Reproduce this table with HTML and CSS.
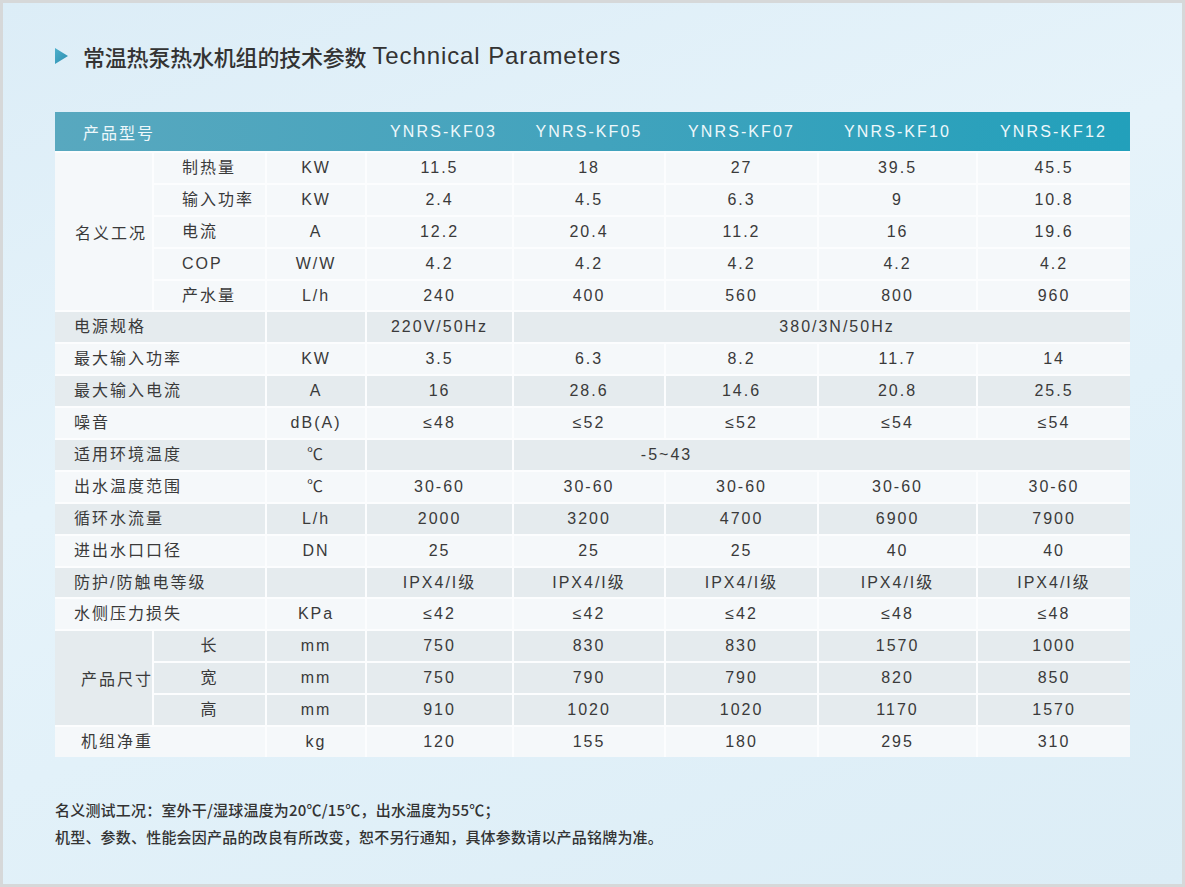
FILE: index.html
```html
<!DOCTYPE html>
<html lang="zh-CN">
<head>
<meta charset="utf-8">
<title>常温热泵热水机组的技术参数</title>
<link rel="stylesheet" href="styles.css">
</head>
<body>
<div class="frame">
  <h1 class="title">
    <svg class="tri" width="13" height="16" viewBox="0 0 13 16"><defs><linearGradient id="tg" x1="0" y1="0" x2="1" y2="1"><stop offset="0" stop-color="#4fb0cc"/><stop offset="1" stop-color="#2a8db0"/></linearGradient></defs><polygon points="0,0 13,8 0,16" fill="url(#tg)"/></svg>
    <span class="title-cn">常温热泵热水机组的技术参数</span><span class="title-en">Technical Parameters</span>
  </h1>

  <table class="spec">
    <colgroup>
      <col class="c1"><col class="c2"><col class="c3"><col class="c4"><col class="c5"><col class="c6"><col class="c7"><col class="c8">
    </colgroup>
    <thead>
      <tr class="head">
        <th colspan="3" class="h-label">产品型号</th>
        <th class="h-first">YNRS-KF03</th><th>YNRS-KF05</th><th>YNRS-KF07</th><th>YNRS-KF10</th><th>YNRS-KF12</th>
      </tr>
    </thead>
    <tbody>
      <tr class="lt">
        <td rowspan="5" class="grp g1">名义工况</td>
        <td class="sub">制热量</td><td>KW</td><td>11.5</td><td>18</td><td>27</td><td>39.5</td><td>45.5</td>
      </tr>
      <tr class="lt"><td class="sub">输入功率</td><td>KW</td><td>2.4</td><td>4.5</td><td>6.3</td><td>9</td><td>10.8</td></tr>
      <tr class="lt"><td class="sub">电流</td><td>A</td><td>12.2</td><td>20.4</td><td>11.2</td><td>16</td><td>19.6</td></tr>
      <tr class="lt"><td class="sub">COP</td><td>W/W</td><td>4.2</td><td>4.2</td><td>4.2</td><td>4.2</td><td>4.2</td></tr>
      <tr class="lt"><td class="sub">产水量</td><td>L/h</td><td>240</td><td>400</td><td>560</td><td>800</td><td>960</td></tr>

      <tr class="gr"><td colspan="2" class="lbl">电源规格</td><td></td><td>220V/50Hz</td><td colspan="4" class="wide-power">380/3N/50Hz</td></tr>
      <tr class="lt"><td colspan="2" class="lbl">最大输入功率</td><td>KW</td><td>3.5</td><td>6.3</td><td>8.2</td><td>11.7</td><td>14</td></tr>
      <tr class="gr"><td colspan="2" class="lbl">最大输入电流</td><td>A</td><td>16</td><td>28.6</td><td>14.6</td><td>20.8</td><td>25.5</td></tr>
      <tr class="lt"><td colspan="2" class="lbl">噪音</td><td>dB(A)</td><td>≤48</td><td>≤52</td><td>≤52</td><td>≤54</td><td>≤54</td></tr>
      <tr class="gr"><td colspan="2" class="lbl">适用环境温度</td><td>℃</td><td></td><td colspan="4" class="wide-temp">-5~43</td></tr>
      <tr class="lt"><td colspan="2" class="lbl">出水温度范围</td><td>℃</td><td>30-60</td><td>30-60</td><td>30-60</td><td>30-60</td><td>30-60</td></tr>
      <tr class="gr"><td colspan="2" class="lbl">循环水流量</td><td>L/h</td><td>2000</td><td>3200</td><td>4700</td><td>6900</td><td>7900</td></tr>
      <tr class="lt"><td colspan="2" class="lbl">进出水口口径</td><td>DN</td><td>25</td><td>25</td><td>25</td><td>40</td><td>40</td></tr>
      <tr class="gr"><td colspan="2" class="lbl">防护/防触电等级</td><td></td><td>IPX4/I级</td><td>IPX4/I级</td><td>IPX4/I级</td><td>IPX4/I级</td><td>IPX4/I级</td></tr>
      <tr class="lt"><td colspan="2" class="lbl">水侧压力损失</td><td>KPa</td><td>≤42</td><td>≤42</td><td>≤42</td><td>≤48</td><td>≤48</td></tr>

      <tr class="gr">
        <td rowspan="3" class="grp g2">产品尺寸</td>
        <td class="dim">长</td><td>mm</td><td>750</td><td>830</td><td>830</td><td>1570</td><td>1000</td>
      </tr>
      <tr class="gr"><td class="dim">宽</td><td>mm</td><td>750</td><td>790</td><td>790</td><td>820</td><td>850</td></tr>
      <tr class="gr"><td class="dim">高</td><td>mm</td><td>910</td><td>1020</td><td>1020</td><td>1170</td><td>1570</td></tr>
      <tr class="lt"><td colspan="2" class="lbl lbl-w">机组净重</td><td>kg</td><td>120</td><td>155</td><td>180</td><td>295</td><td>310</td></tr>
    </tbody>
  </table>

  <div class="notes">
    <p>名义测试工况：室外干/湿球温度为20℃/15℃，出水温度为55℃；</p>
    <p>机型、参数、性能会因产品的改良有所改变，恕不另行通知，具体参数请以产品铭牌为准。</p>
  </div>
</div>
</body>
</html>
```

FILE: styles.css
```css
html, body {
  margin: 0;
  padding: 0;
}

body {
  width: 1185px;
  height: 887px;
  overflow: hidden;
  font-family: "Liberation Sans", "Noto Sans CJK SC", sans-serif;
  color: #3a3a3a;
}

.frame {
  box-sizing: border-box;
  width: 1185px;
  height: 887px;
  border: 3px solid #d6d8d9;
  padding: 38px 52px 0 52px;
  background: linear-gradient(160deg, #dcedf7 0%, #e6f3fa 40%, #e2f1f9 60%, #dcedf6 100%);
}

.title {
  margin: 0;
  height: 30px;
  display: flex;
  align-items: center;
  font-weight: 500;
  color: #333;
  line-height: 30px;
}

.tri {
  display: block;
  margin-right: 15px;
  flex: none;
}

.title-cn {
  font-family: "Noto Sans CJK SC", sans-serif;
  font-size: 22px;
  letter-spacing: -0.2px;
}

.title-en {
  font-family: "Liberation Sans", sans-serif;
  font-size: 24px;
  letter-spacing: 0.9px;
  margin-left: 6px;
  font-weight: 400;
}

.spec {
  margin-top: 41px;
  width: 1075px;
  table-layout: fixed;
  border-collapse: collapse;
  border-style: hidden;
  font-size: 16px;
  letter-spacing: 2px;
}

.c1 { width: 98px; }
.c2 { width: 113px; }
.c3 { width: 100px; }
.c4 { width: 147px; }
.c5 { width: 152px; }
.c6 { width: 153px; }
.c7 { width: 159px; }
.c8 { width: 153px; }

.head {
  height: 39px;
  background: linear-gradient(90deg, #58a8bf 0%, #42a3bd 50%, #22a0bb 100%);
}

.head th {
  border: 0;
  padding: 0;
  height: 39px;
  font-weight: 400;
  color: #eef8fb;
  text-align: center;
  letter-spacing: 2.1px;
}

.head th.h-first { padding-left: 8px; }

.head .h-label {
  text-align: left;
  padding-left: 28px;
  font-family: "Noto Sans CJK SC", sans-serif;
  letter-spacing: 2px;
}

.spec td {
  border: 2px solid #fcfdfe;
  padding: 0;
  height: 29.9px;
  text-align: center;
  vertical-align: middle;
  white-space: nowrap;
  line-height: 20px;
}

.spec tr.lt td { background: #f5f8fa; }
.spec tr.gr td { background: #e5ebee; }
.spec tr.lt td.g1 { background: #f5f8fa; }
.spec tr.gr td.g2 { background: #e5ebee; }

.spec td.grp {
  text-align: left;
  font-family: "Noto Sans CJK SC", sans-serif;
}

.spec td.g1 { padding-left: 20px; }
.spec td.g2 { padding-left: 26px; }

.spec td.sub {
  text-align: left;
  padding-left: 28px;
}

.spec td.lbl {
  text-align: left;
  padding-left: 19px;
}

.spec td.lbl-w { padding-left: 26px; }

.spec td.dim { text-align: center; }

.spec td.wide-power { padding-left: 30px; }
.spec td.wide-temp { padding-right: 311px; }

.notes {
  margin-top: 39px;
  font-family: "Noto Sans CJK SC", sans-serif;
  font-size: 15px;
  font-weight: 500;
  color: #333;
  letter-spacing: 0.2px;
}

.notes p {
  margin: 0;
  line-height: 27px;
}
```
